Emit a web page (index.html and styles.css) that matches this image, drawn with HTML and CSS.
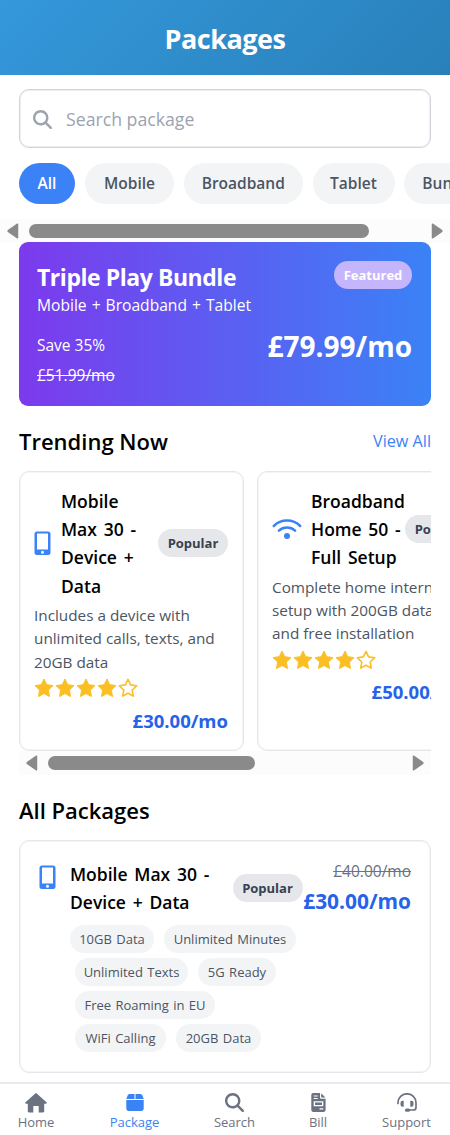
FILE: index.html
```html
<!DOCTYPE html>
<html lang="en">
<head>
<meta charset="utf-8">
<title>Packages</title>
<link rel="stylesheet" href="styles.css">
</head>
<body>
<svg class="defs" width="0" height="0" aria-hidden="true">
  <symbol id="search" viewBox="0 0 512 512"><path fill="currentColor" d="M416 208c0 45.900-14.900 88.300-40 122.700l126.600 126.700c12.500 12.500 12.500 32.800 0 45.300s-32.800 12.500-45.300 0L330.700 376c-34.400 25.200-76.800 40-122.700 40C93.100 416 0 322.900 0 208S93.100 0 208 0s208 93.100 208 208zM208 352a144 144 0 1 0 0-288 144 144 0 1 0 0 288z"/></symbol>
  <symbol id="phone" viewBox="0 0 17 25"><path fill="currentColor" fill-rule="evenodd" d="M3 .5h11A2.500 2.500 0 0 1 16.500 3v18.500A2.500 2.500 0 0 1 14 24H3A2.500 2.500 0 0 1 .5 21.500V3A2.500 2.500 0 0 1 3 .5zM3 2.500v16h11v-16zM8.500 19.800a1.500 1.500 0 1 0 0 3 1.500 1.500 0 1 0 0-3z"/></symbol>
  <symbol id="wifi" viewBox="0 0 30 22"><g fill="none" stroke="currentColor" stroke-width="2.500" stroke-linecap="round"><path d="M1.800 8C9 .8 21 .8 28.200 8M6.900 12.700c4.500-4.200 11.700-4.200 16.200 0"/></g><circle cx="15" cy="18" r="3" fill="currentColor"/></symbol>
  <symbol id="star" viewBox="0 0 20 20"><path fill="currentColor" stroke="currentColor" stroke-width="1" stroke-linejoin="round" d="M10 1l2.700 5.700 6.300.9-4.600 4.500 1.100 6.400-5.500-3-5.500 3 1.100-6.400L1 7.600l6.300-.9z"/></symbol>
  <symbol id="star-empty" viewBox="0 0 20 20"><path fill="none" stroke="currentColor" stroke-width="1.600" stroke-linejoin="round" d="M10 1.400l2.600 5.500 6 .9-4.400 4.200 1.100 6.100-5.300-2.900-5.300 2.900 1.100-6.100-4.400-4.200 6-.9z"/></symbol>
  <symbol id="home" viewBox="0 0 22 20"><path fill="currentColor" d="M10.300.4a1 1 0 0 1 1.400 0l9.800 8.900c.6.600.3 1.500-.6 1.500h-1.700v7.400c0 .7-.5 1.200-1.200 1.200h-4.300V13H8.300v6.400H4c-.7 0-1.200-.5-1.200-1.200v-7.400H1.100c-.9 0-1.200-.9-.6-1.500z"/></symbol>
  <symbol id="package" viewBox="0 0 18 17"><path fill="currentColor" d="M4 0h4.500v5H.3l1.300-3.500C2 .5 2.900 0 4 0zM9.500 0H14c1.100 0 2 .5 2.400 1.500L17.700 5H9.500zM.3 6h17.400v8.500c0 1.500-1 2.500-2.500 2.500H2.800C1.300 17 .3 16 .3 14.500z"/></symbol>
  <symbol id="bill" viewBox="0 0 15 19"><path fill="currentColor" fill-rule="evenodd" d="M2.200 0H9v4.500c0 .8.500 1.300 1.300 1.300h4.300V17c0 1.100-.8 1.900-1.900 1.900H2.200C1.100 18.900.3 18.100.3 17V1.900C.3.800 1.100 0 2.200 0zM2.700 2.400v1.100h4V2.400zm0 2.500V6h4V4.900zM2.700 8.200v5h9.600v-5zm1.300 1.300h7V12H4zM8.500 15.200v1.200h3.800v-1.200z"/><path fill="currentColor" d="M10.200.2l4.200 4.300h-4.200z"/></symbol>
  <symbol id="support" viewBox="0 0 20 19"><path fill="none" stroke="currentColor" stroke-width="1.700" stroke-linecap="round" d="M1 10.500V9.800a9 9 0 0 1 18 0v4.700c0 1.500-1 2.500-2.500 2.500h-5"/><path fill="currentColor" d="M6.700 7.700v6H5.500a2 2 0 0 1-2-2V9.700a2 2 0 0 1 2-2zM13.300 7.700v6h1.200a2 2 0 0 0 2-2V9.700a2 2 0 0 0-2-2z"/><rect x="8" y="15.500" width="5" height="3.300" rx="1.600" fill="currentColor"/></symbol>
  <symbol id="arrow" viewBox="0 0 12 16"><path fill="#8a8a8a" stroke="#8a8a8a" stroke-width="1.500" stroke-linejoin="round" d="M10.500 1.200v13.600L1.200 8.500v-1z"/></symbol>
</svg>

<header class="header"><h1>Packages</h1></header>

<div class="search"><svg class="search-icon"><use href="#search"/></svg><span>Search package</span></div>

<nav class="filters">
  <button class="filter f-all active">All</button>
  <button class="filter f-mobile">Mobile</button>
  <button class="filter f-broadband">Broadband</button>
  <button class="filter f-tablet">Tablet</button>
  <button class="filter f-bundle">Bundles</button>
</nav>
<div class="scrollbar page-bar"><svg class="arrow"><use href="#arrow"/></svg><div class="thumb"></div><svg class="arrow right"><use href="#arrow"/></svg></div>

<main class="content">
  <section class="banner">
    <div class="banner-left">
      <h2>Triple Play Bundle</h2>
      <p class="sub">Mobile + Broadband + Tablet</p>
      <p class="save">Save 35%</p>
      <p class="old">£51.99/mo</p>
    </div>
    <div class="banner-right">
      <span class="featured">Featured</span>
      <strong class="banner-price">£79.99/mo</strong>
    </div>
  </section>

  <div class="section-head"><h3 class="trending">Trending Now</h3><a class="view">View All</a></div>

  <section class="carousel">
    <article class="card">
      <div class="card-head">
        <svg class="phone"><use href="#phone"/></svg>
        <h4>Mobile<br>Max 30 -<br>Device +<br>Data</h4>
        <span class="badge">Popular</span>
      </div>
      <p class="desc">Includes a device with<br>unlimited calls, texts, and<br>20GB data</p>
      <div class="stars"><svg><use href="#star"/></svg><svg><use href="#star"/></svg><svg><use href="#star"/></svg><svg><use href="#star"/></svg><svg><use href="#star-empty"/></svg></div>
      <strong class="price">£30.00/mo</strong>
    </article>
    <article class="card wide">
      <div class="card-head">
        <svg class="wifi"><use href="#wifi"/></svg>
        <h4>Broadband<br>Home 50 -<br>Full Setup</h4>
        <span class="badge">Popular</span>
      </div>
      <p class="desc">Complete home internet<br>setup with 200GB data<br>and free installation</p>
      <div class="stars"><svg><use href="#star"/></svg><svg><use href="#star"/></svg><svg><use href="#star"/></svg><svg><use href="#star"/></svg><svg><use href="#star-empty"/></svg></div>
      <strong class="price">£50.00/mo</strong>
    </article>
  </section>
  <div class="scrollbar card-bar"><svg class="arrow"><use href="#arrow"/></svg><div class="thumb"></div><svg class="arrow right"><use href="#arrow"/></svg></div>

  <h3 class="all-title">All Packages</h3>
  <article class="package">
    <svg class="phone"><use href="#phone"/></svg>
    <div class="package-body">
      <div class="package-head">
        <h4>Mobile Max 30 -<br>Device + Data</h4>
        <span class="badge">Popular</span>
        <div class="package-prices"><s>£40.00/mo</s><strong>£30.00/mo</strong></div>
      </div>
      <div class="tags">
        <div class="tag-row first"><span class="w84">10GB Data</span><span class="w132">Unlimited Minutes</span></div>
        <div class="tag-row"><span class="w113">Unlimited Texts</span><span class="w78">5G Ready</span></div>
        <div class="tag-row"><span class="w140">Free Roaming in EU</span></div>
        <div class="tag-row"><span class="w91">WiFi Calling</span><span class="w85">20GB Data</span></div>
      </div>
    </div>
  </article>
</main>

<footer class="tabs">
  <a class="tab t-home"><svg width="22" height="20"><use href="#home"/></svg><span>Home</span></a>
  <a class="tab t-package current"><svg width="18" height="17"><use href="#package"/></svg><span>Package</span></a>
  <a class="tab t-search"><svg width="19" height="19"><use href="#search"/></svg><span>Search</span></a>
  <a class="tab t-bill"><svg width="15" height="19"><use href="#bill"/></svg><span>Bill</span></a>
  <a class="tab t-support"><svg width="20" height="19"><use href="#support"/></svg><span>Support</span></a>
</footer>
</body>
</html>
```

FILE: styles.css
```css
* { box-sizing: border-box; margin: 0; padding: 0; }
html, body { overflow: hidden; }
body { width: 450px; height: 1135px; background: #fff; color: #000; font-family: "Open Sans", "Noto Sans", sans-serif; display: flex; flex-direction: column; white-space: nowrap; }
svg { display: block; flex: none; }
.defs { position: absolute; }
.header { height: 75px; padding-top: 3px; flex: none; display: flex; align-items: center; justify-content: center; background: linear-gradient(135deg, #3498db, #2980b9); color: #fff; }
h1 { font-size: 27px; line-height: 36px; font-weight: 700; letter-spacing: -.5px; }
.search { height: 59px; margin: 14px 19px 15px; flex: none; border: 1px solid #d1d5db; box-shadow: inset 0 0 0 1px #eceef1; border-radius: 10px; display: flex; align-items: center; gap: 15px; padding: 1px 13px 0; color: #9ca3af; font-size: 17.700px; }
.search span { margin-left: -1px; }
.search-icon { width: 19px; height: 19px; }
.filters { display: flex; gap: 10px; padding-left: 19px; height: 56px; flex: none; overflow: hidden; }
.filter { flex: none; height: 41px; padding-bottom: 2px; border: 0; border-radius: 21px; background: #f3f4f6; color: #4b5563; font: 600 15.500px "Open Sans", sans-serif; text-align: center; }
.filter.active { background: #3b82f6; color: #fff; }
.f-all { width: 56px; }
.f-mobile { width: 89px; }
.f-broadband { width: 118.500px; }
.f-tablet { width: 82px; }
.f-bundle { width: 97px; margin-left: -.5px; }
.scrollbar { flex: none; height: 24px; background: #fcfcfc; display: flex; align-items: center; }
.arrow { width: 12px; height: 16px; }
.arrow.right { transform: scaleX(-1); margin-left: auto; }
.thumb { height: 14px; border-radius: 7px; background: #8a8a8a; margin-left: 10px; }
.page-bar { padding: 0 7px; }
.page-bar .thumb { width: 340px; }
.card-bar { padding: 0 7px; }
.card-bar .thumb { width: 207px; }
.content { padding: 0 19px; flex: none; margin-top: -1px; }
.banner { height: 164px; border-radius: 9px; padding: 18px 19px 0 18px; display: flex; justify-content: space-between; color: #fff; background: linear-gradient(90deg, #7c3aed, #3b82f6); }
h2 { font-size: 23px; line-height: 34px; letter-spacing: -.45px; }
.sub { font-size: 15.600px; line-height: 23px; word-spacing: 1px; }
.save { font-size: 15.500px; line-height: 23px; margin-top: 17px; }
.old { font-size: 15.500px; line-height: 23px; margin-top: 7px; text-decoration: line-through; }
.banner-right { display: flex; flex-direction: column; align-items: flex-end; }
.featured { width: 78px; height: 28px; margin-top: 1px; line-height: 28px; text-align: center; border-radius: 14px; background: #c4b5fd; font-size: 13px; font-weight: 700; }
.banner-price { font-size: 28px; line-height: 36px; margin-top: 39px; }
.section-head { height: 36px; margin: 17px 0 12px; display: flex; align-items: center; justify-content: space-between; }
h3 { font-size: 22px; line-height: 32px; font-weight: 600; }
.view { color: #3b82f6; font-size: 16.200px; }
.carousel { display: flex; gap: 13px; overflow: hidden; height: 280px; }
.card, .package { border: 1px solid #e5e7eb; box-shadow: inset 0 0 0 1px #f3f4f6; border-radius: 10px; }
.card { flex: none; width: 225px; height: 280px; padding: 15px 15px 0 14px; }
.card.wide { width: 226px; }
.card-head { display: flex; align-items: center; }
h4 { font-size: 17.500px; line-height: 28.200px; font-weight: 600; word-spacing: 2.200px; flex: none; }
.phone { width: 17px; height: 25px; color: #3b82f6; }
.card h4 { margin-left: 10px; }
.wifi { width: 30px; height: 22px; color: #3b82f6; }
.badge { flex: none; width: 70px; height: 28px; border-radius: 14px; background: #e5e7eb; color: #374151; font-size: 13px; line-height: 28px; text-align: center; font-weight: 700; margin-left: auto; }
.wide .badge { margin-left: 4px; }
.wide h4 { margin-left: 9px; width: 90px; }
.desc { color: #4b5563; font-size: 15.300px; line-height: 23.400px; margin-top: 4px; }
.stars { display: flex; gap: 1px; color: #fbbf24; margin-top: 4px; }
.stars svg { width: 20px; height: 20px; }
.price { display: block; text-align: right; color: #2563eb; font-size: 18.500px; line-height: 28px; margin-top: 9px; }
.wide .price { margin-top: 8px; }
.all-title { margin-top: 19px; }
.package { height: 233px; margin-top: 14px; padding: 18px 20px 18px 19px; display: flex; }
.package .phone { margin-top: 6px; }
.package-body { margin-left: 14px; flex: none; width: 341px; }
.package-head { display: flex; height: 58px; align-items: center; }
.package-head h4 { width: 163px; }
.package-head .badge { margin-left: -.5px; }
.package-prices { margin-left: auto; display: flex; flex-direction: column; align-items: flex-end; color: #6b7280; margin-top: -3px; }
.package-prices s { font-size: 15.500px; line-height: 29px; }
.package-prices strong { font-size: 20.900px; line-height: 30px; color: #2563eb; }
.tags { display: flex; flex-direction: column; gap: 5px; margin-top: 8px; }
.tag-row { display: flex; gap: 10px; padding-left: 5px; }
.tag-row.first { padding-left: 0; }
.tag-row span { height: 28px; border-radius: 14px; line-height: 28px; background: #f3f4f6; color: #4b5563; font-size: 13px; text-align: center; word-spacing: 1px; }
.w84 { width: 84px; }
.w132 { width: 132px; }
.w113 { width: 113px; }
.w78 { width: 78px; }
.w140 { width: 140px; }
.w91 { width: 91px; }
.w85 { width: 85px; }
.tabs { margin-top: auto; flex: none; height: 53px; border-top: 2px solid #e8eaee; display: grid; grid-template-columns: 85px 99px 101px 66px 99px; }
.tab { display: grid; grid-template-rows: 19px 20px; align-content: start; padding-top: 9px; justify-items: center; align-items: center; color: #6b7280; font-size: 13px; line-height: 20px; }
.t-home { padding-right: 13px; }
.tab.current { color: #3b82f6; }
.t-support { padding-left: 12px; }
```
